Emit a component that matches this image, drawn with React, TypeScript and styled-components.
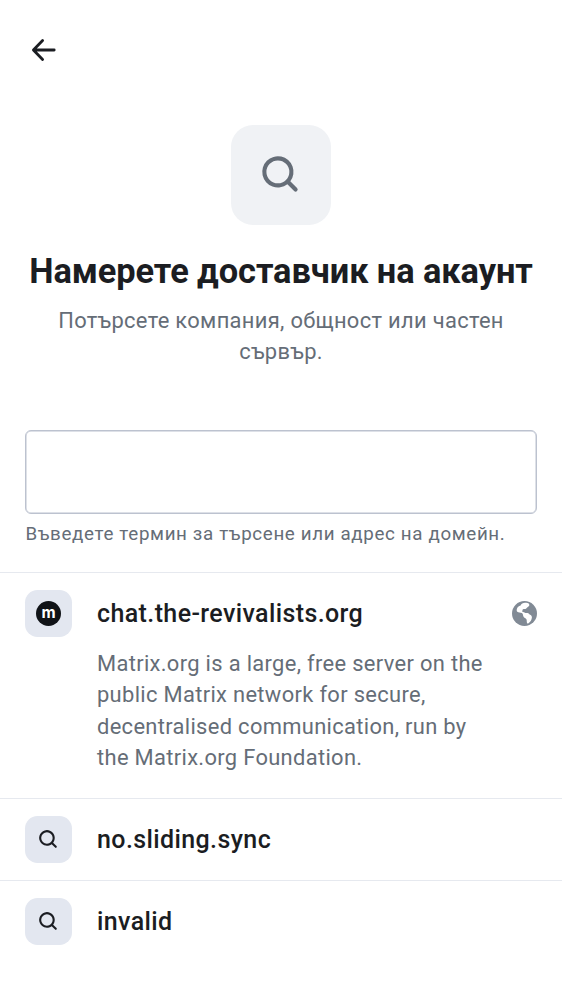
import React from 'react';
import styled, { createGlobalStyle } from 'styled-components';

const Global = createGlobalStyle`
  * { box-sizing: border-box; }
  body { margin: 0; background: #fff; font-family: Roboto, sans-serif; color: #1b1d22; }
  h1, p { margin: 0; }
`;

const Screen = styled.main`
  width: 562px;
  height: 1000px;
  overflow: hidden;
  background: #fff;
`;

const TopBar = styled.header`
  height: 100px;
  padding: 37px 0 0 31px;
`;

const BackButton = styled.button`
  display: block;
  width: 25px;
  height: 25px;
  padding: 0;
  border: 0;
  background: none;
  svg { display: block; }
`;

const Hero = styled.section`
  display: flex;
  flex-direction: column;
  align-items: center;
  height: 330px;
  padding-top: 25px;
  text-align: center;
`;

const HeroTile = styled.div`
  display: grid;
  place-items: center;
  width: 100px;
  height: 100px;
  border-radius: 22px;
  background: #f0f2f5;
`;

const Title = styled.h1`
  margin-top: 25px;
  font-size: 34.4px;
  line-height: 43px;
  font-weight: 700;
  letter-spacing: -0.08px;
  white-space: nowrap;
`;

const Subtitle = styled.p`
  margin-top: 12px;
  font-size: 21.9px;
  line-height: 31.25px;
  letter-spacing: 0.32px;
  color: #656d77;
  white-space: nowrap;
`;

const Field = styled.div`
  height: 142px;
  padding: 0 25px;
`;

const Input = styled.input`
  display: block;
  width: 512px;
  height: 84px;
  border: 1px solid #bcc2cf;
  border-radius: 6px;
  background: #fff;
  box-shadow: inset 0 0 0 0.5px #bcc2cf;
  outline: none;
`;

const Hint = styled.p`
  margin-top: 6px;
  padding-left: 0.5px;
  font-size: 18.75px;
  line-height: 28px;
  letter-spacing: 0.65px;
  color: #656d77;
  white-space: nowrap;
`;

const Row = styled.article<{ $height: number }>`
  height: ${(p) => p.$height}px;
  padding: 17px 25px 0;
  border-top: 1px solid #e6e9ef;
`;

const RowHead = styled.div`
  display: flex;
  align-items: center;
  gap: 25px;
`;

const IconTile = styled.div`
  display: grid;
  place-items: center;
  width: 47px;
  height: 47px;
  border-radius: 12.5px;
  background: #e3e7f0;
`;

const Name = styled.span`
  flex: 1;
  font-size: 25px;
  line-height: 37px;
  font-weight: 500;
  letter-spacing: 0.39px;
`;

const Description = styled.p`
  margin: 11px 0 0 72px;
  font-size: 21.9px;
  line-height: 31.25px;
  letter-spacing: 0.33px;
  color: #656d77;
  white-space: nowrap;
`;

const MatrixBadge = styled.div`
  display: grid;
  place-items: center;
  width: 25px;
  height: 25px;
  border-radius: 50%;
  background: #101317;
  color: #fff;
  font: 700 15.5px/20px Inter, sans-serif;
  span { display: block; margin-top: -2px; }
`;

const SearchIcon = ({ size, color }: { size: number; color: string }) => (
  <svg width={size} height={size} viewBox="0 0 24 24" fill={color}>
    <path d="M15.05 16.463a7.5 7.5 0 1 1 1.414-1.414l3.243 3.244a1 1 0 0 1-1.414 1.414zM16 10.5a5.5 5.5 0 1 0-11 0 5.5 5.5 0 0 0 11 0" />
  </svg>
);

const BackIcon = () => (
  <svg width="25" height="25" viewBox="0 0 25 25" fill="none" stroke="#1b1d22" strokeWidth="2.8" strokeLinecap="round" strokeLinejoin="round">
    <path d="M23.2 13H2.6M11.6 3.6 2.4 13 11.6 22.4" />
  </svg>
);

const GlobeIcon = () => (
  <svg width="25" height="25" viewBox="0 0 25 25">
    <circle cx="12.5" cy="12.5" r="12.5" fill="#818a95" />
    <path fill="#fff" d="M4.8 8.2C5.3 6 6.8 5 8.6 4.5 9.3 2.7 11 1.7 13 1.7c1.8 0 3.3.1 3.9 1 .7 1 .6 2-.5 2.8-1 .6-1.5 1.2-2.2 1.9-.8.8-2.2.3-3.2.9-.8.6-.5 1.6-.8 2.4 1.2.3 2.3.8 3.3 1.4 1.6-.2 3.2 0 4.1 1.3 1.6.5 2.5 1.7 2.3 3.2-.2 2.6-1.6 4.5-3.7 5.8-1 .3-1.3-.5-1.4-1.5-.1-1.3.1-2.5-1-3.3-1.3-.9-2.7-2-2.8-3.7 0-.8-.3-1.5-1.1-2-1.5-.6-3.4-.2-4.6-1.2-.7-.6-.7-1.6-.5-2.5z" />
  </svg>
);

export default function App() {
  return (
    <>
      <Global />
      <Screen>
        <TopBar><BackButton aria-label="Назад"><BackIcon /></BackButton></TopBar>
        <Hero>
          <HeroTile><SearchIcon size={50} color="#656d77" /></HeroTile>
          <Title>Намерете доставчик на акаунт</Title>
          <Subtitle>Потърсете компания, общност или частен<br />сървър.</Subtitle>
        </Hero>
        <Field>
          <Input aria-label="Търсене" />
          <Hint>Въведете термин за търсене или адрес на домейн.</Hint>
        </Field>
        <Row $height={226}>
          <RowHead>
            <IconTile><MatrixBadge><span>m</span></MatrixBadge></IconTile>
            <Name>chat.the-revivalists.org</Name>
            <GlobeIcon />
          </RowHead>
          <Description>
            Matrix.org is a large, free server on the<br />public Matrix network for secure,<br />decentralised communication, run by<br />the Matrix.org Foundation.
          </Description>
        </Row>
        <Row $height={82}>
          <RowHead><IconTile><SearchIcon size={25} color="#1b1d22" /></IconTile><Name>no.sliding.sync</Name></RowHead>
        </Row>
        <Row $height={82}>
          <RowHead><IconTile><SearchIcon size={25} color="#1b1d22" /></IconTile><Name>invalid</Name></RowHead>
        </Row>
      </Screen>
    </>
  );
}
